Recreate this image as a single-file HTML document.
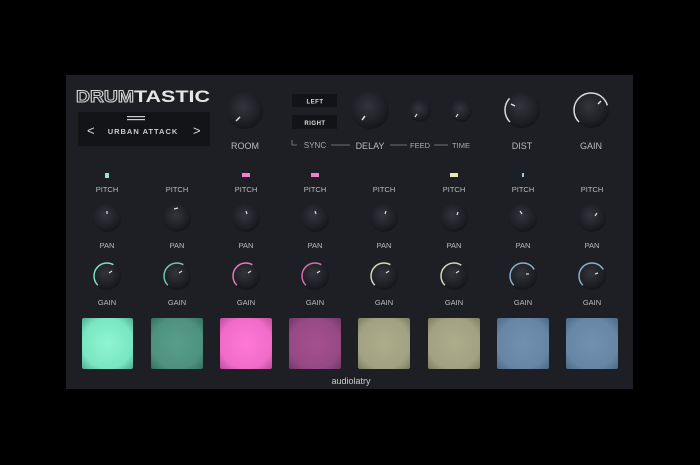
<!DOCTYPE html>
<html><head><style>
html,body{margin:0;padding:0;background:#000;width:700px;height:465px;overflow:hidden}
svg{display:block}
text{font-family:"Liberation Sans",sans-serif}
</style></head><body>
<svg width="700" height="465" viewBox="0 0 700 465" xmlns="http://www.w3.org/2000/svg">
<defs>
<radialGradient id="k" cx="45%" cy="40%" r="60%"><stop offset="0" stop-color="#33353c"/><stop offset="0.8" stop-color="#1c1d22"/><stop offset="1" stop-color="#141519"/></radialGradient>
<radialGradient id="p1" cx="50%" cy="50%" r="70%"><stop offset="0" stop-color="#8ff5d2"/><stop offset="0.7" stop-color="#7ae6c2"/><stop offset="1" stop-color="#4fae90"/></radialGradient>
<radialGradient id="p2" cx="50%" cy="50%" r="70%"><stop offset="0" stop-color="#579f8b"/><stop offset="0.7" stop-color="#4e917e"/><stop offset="1" stop-color="#36705f"/></radialGradient>
<radialGradient id="p3" cx="50%" cy="50%" r="70%"><stop offset="0" stop-color="#ff78d6"/><stop offset="0.7" stop-color="#f06cc8"/><stop offset="1" stop-color="#c04d9c"/></radialGradient>
<radialGradient id="p4" cx="50%" cy="50%" r="70%"><stop offset="0" stop-color="#a5508f"/><stop offset="0.7" stop-color="#964985"/><stop offset="1" stop-color="#723866"/></radialGradient>
<radialGradient id="p5" cx="50%" cy="50%" r="70%"><stop offset="0" stop-color="#adad8c"/><stop offset="0.7" stop-color="#a2a283"/><stop offset="1" stop-color="#7d7d63"/></radialGradient>
<radialGradient id="p7" cx="50%" cy="50%" r="70%"><stop offset="0" stop-color="#7190b0"/><stop offset="0.7" stop-color="#6786a6"/><stop offset="1" stop-color="#4e6982"/></radialGradient>
</defs>
<rect x="66" y="75" width="567" height="314" fill="#1d1f25"/>
<!-- logo -->
<text x="76" y="102" font-size="17" font-weight="bold" fill="none" stroke="#d8d8d8" stroke-width="1" textLength="58" lengthAdjust="spacingAndGlyphs">DRUM</text>
<text x="134" y="102" font-size="17" font-weight="bold" fill="#e6e6e6" textLength="76" lengthAdjust="spacingAndGlyphs">TASTIC</text>
<!-- preset -->
<rect x="78" y="112" width="132" height="34" fill="#131418"/>
<rect x="127" y="116" width="18" height="1.2" fill="#ccc"/><rect x="127" y="119" width="18" height="1.2" fill="#ccc"/>
<text x="87" y="135" font-size="13" fill="#ddd">&lt;</text>
<text x="193" y="135" font-size="13" fill="#ddd">&gt;</text>
<text x="143" y="134" font-size="7.5" font-weight="bold" fill="#ccc" text-anchor="middle" letter-spacing="1">URBAN ATTACK</text>
<!-- room -->
<circle cx="245" cy="111" r="18" fill="url(#k)"/><line x1="236" y1="121" x2="240" y2="117" stroke="#ddd" stroke-width="1.5"/>
<text x="245" y="149" font-size="9" fill="#bbb" text-anchor="middle">ROOM</text>
<!-- left/right -->
<rect x="292" y="94" width="45" height="13" fill="#121317"/><text x="315" y="103.5" font-size="6" font-weight="bold" fill="#ddd" text-anchor="middle" letter-spacing="0.5">LEFT</text>
<rect x="292" y="115" width="45" height="14" fill="#121317"/><text x="315" y="125" font-size="6" font-weight="bold" fill="#ddd" text-anchor="middle" letter-spacing="0.5">RIGHT</text>
<path d="M292 140v5h5" stroke="#888" fill="none" stroke-width="0.8"/>
<text x="315" y="148" font-size="8" fill="#aaa" text-anchor="middle">SYNC</text>
<line x1="331" y1="145" x2="350" y2="145" stroke="#888" stroke-width="0.8"/>
<circle cx="370" cy="110" r="19" fill="url(#k)"/><line x1="362" y1="120" x2="365" y2="116" stroke="#ddd" stroke-width="1.5"/>
<text x="370" y="149" font-size="9" fill="#bbb" text-anchor="middle">DELAY</text>
<line x1="390" y1="145" x2="407" y2="145" stroke="#888" stroke-width="0.8"/>
<circle cx="420" cy="111" r="11" fill="url(#k)"/><line x1="415" y1="117" x2="417" y2="114" stroke="#ddd" stroke-width="1.2"/>
<text x="420" y="148" font-size="7.5" fill="#aaa" text-anchor="middle">FEED</text>
<line x1="434" y1="145" x2="448" y2="145" stroke="#888" stroke-width="0.8"/>
<circle cx="461" cy="111" r="11" fill="url(#k)"/><line x1="456" y1="117" x2="458" y2="114" stroke="#ddd" stroke-width="1.2"/>
<text x="461" y="148" font-size="7.5" fill="#aaa" text-anchor="middle">TIME</text>
<circle cx="522" cy="110" r="18" fill="url(#k)"/>
<circle cx="522" cy="110" r="17" fill="none" stroke="#ddd" stroke-width="1.5" stroke-dasharray="26 200" transform="rotate(135 522 110)"/>
<line x1="511" y1="104" x2="515" y2="106" stroke="#ddd" stroke-width="1.5"/>
<text x="522" y="149" font-size="9" fill="#bbb" text-anchor="middle">DIST</text>
<circle cx="591" cy="110" r="18" fill="url(#k)"/>
<circle cx="591" cy="110" r="17" fill="none" stroke="#ddd" stroke-width="1.5" stroke-dasharray="62 200" transform="rotate(135 591 110)"/>
<line x1="601" y1="101" x2="598" y2="104" stroke="#ddd" stroke-width="1.5"/>
<text x="591" y="149" font-size="9" fill="#bbb" text-anchor="middle">GAIN</text>
<!-- channels -->
<g font-size="7.5" fill="#bbb" text-anchor="middle">
<text x="107" y="192">PITCH</text><text x="177" y="192">PITCH</text><text x="246" y="192">PITCH</text><text x="315" y="192">PITCH</text><text x="384" y="192">PITCH</text><text x="454" y="192">PITCH</text><text x="523" y="192">PITCH</text><text x="592" y="192">PITCH</text>
<text x="107" y="248">PAN</text><text x="177" y="248">PAN</text><text x="246" y="248">PAN</text><text x="315" y="248">PAN</text><text x="384" y="248">PAN</text><text x="454" y="248">PAN</text><text x="523" y="248">PAN</text><text x="592" y="248">PAN</text>
<text x="107" y="305">GAIN</text><text x="177" y="305">GAIN</text><text x="246" y="305">GAIN</text><text x="315" y="305">GAIN</text><text x="384" y="305">GAIN</text><text x="454" y="305">GAIN</text><text x="523" y="305">GAIN</text><text x="592" y="305">GAIN</text>
</g>
<rect x="105" y="173" width="4" height="5" fill="#8fe8c8"/>
<rect x="242" y="173" width="8" height="4" fill="#f080c8"/>
<rect x="311" y="173" width="8" height="4" fill="#f080c8"/>
<rect x="450" y="173" width="8" height="4" fill="#e8e8b0"/>
<rect x="522" y="173" width="2" height="4" fill="#9ac8e0"/>
<g>
<circle cx="107" cy="218" r="14" fill="url(#k)"/><line x1="107" y1="211" x2="107" y2="214" stroke="#ddd" stroke-width="1.2"/>
<circle cx="177" cy="218" r="14" fill="url(#k)"/><line x1="174" y1="209" x2="178" y2="208" stroke="#ddd" stroke-width="1.2"/>
<circle cx="246" cy="218" r="14" fill="url(#k)"/><line x1="246" y1="211" x2="247" y2="214" stroke="#ddd" stroke-width="1.2"/>
<circle cx="315" cy="218" r="14" fill="url(#k)"/><line x1="315" y1="211" x2="316" y2="214" stroke="#ddd" stroke-width="1.2"/>
<circle cx="384" cy="218" r="14" fill="url(#k)"/><line x1="386" y1="211" x2="385" y2="214" stroke="#ddd" stroke-width="1.2"/>
<circle cx="454" cy="218" r="14" fill="url(#k)"/><line x1="458" y1="212" x2="457" y2="215" stroke="#ddd" stroke-width="1.2"/>
<circle cx="523" cy="218" r="14" fill="url(#k)"/><line x1="520" y1="211" x2="522" y2="214" stroke="#ddd" stroke-width="1.2"/>
<circle cx="592" cy="218" r="14" fill="url(#k)"/><line x1="597" y1="213" x2="595" y2="216" stroke="#ddd" stroke-width="1.2"/>
</g>
<g stroke-width="1.5" fill="none">
<circle cx="107" cy="276" r="14" fill="url(#k)"/><circle cx="107" cy="276" r="13" stroke="#7fe0c0" stroke-dasharray="37 200" transform="rotate(135 107 276)"/>
<circle cx="177" cy="276" r="14" fill="url(#k)"/><circle cx="177" cy="276" r="13" stroke="#6cc8a8" stroke-dasharray="37 200" transform="rotate(135 177 276)"/>
<circle cx="246" cy="276" r="14" fill="url(#k)"/><circle cx="246" cy="276" r="13" stroke="#e878b8" stroke-dasharray="37 200" transform="rotate(135 246 276)"/>
<circle cx="315" cy="276" r="14" fill="url(#k)"/><circle cx="315" cy="276" r="13" stroke="#d070a8" stroke-dasharray="37 200" transform="rotate(135 315 276)"/>
<circle cx="384" cy="276" r="14" fill="url(#k)"/><circle cx="384" cy="276" r="13" stroke="#d8d8b8" stroke-dasharray="37 200" transform="rotate(135 384 276)"/>
<circle cx="454" cy="276" r="14" fill="url(#k)"/><circle cx="454" cy="276" r="13" stroke="#d8d8b8" stroke-dasharray="38 200" transform="rotate(135 454 276)"/>
<circle cx="523" cy="276" r="14" fill="url(#k)"/><circle cx="523" cy="276" r="13" stroke="#8ab0c8" stroke-dasharray="44 200" transform="rotate(135 523 276)"/>
<circle cx="592" cy="276" r="14" fill="url(#k)"/><circle cx="592" cy="276" r="13" stroke="#8ab0c8" stroke-dasharray="44 200" transform="rotate(135 592 276)"/>
</g>
<g stroke="#ddd" stroke-width="1.2">
<line x1="112" y1="271" x2="109" y2="273"/><line x1="182" y1="271" x2="179" y2="273"/><line x1="251" y1="271" x2="248" y2="273"/><line x1="320" y1="271" x2="317" y2="273"/>
<line x1="389" y1="271" x2="386" y2="273"/><line x1="459" y1="271" x2="456" y2="273"/><line x1="529" y1="274" x2="526" y2="274"/><line x1="598" y1="273" x2="595" y2="274"/>
</g>
<rect x="82" y="318" width="51" height="51" rx="2" fill="url(#p1)"/>
<rect x="151" y="318" width="52" height="51" rx="2" fill="url(#p2)"/>
<rect x="220" y="318" width="52" height="51" rx="2" fill="url(#p3)"/>
<rect x="289" y="318" width="52" height="51" rx="2" fill="url(#p4)"/>
<rect x="358" y="318" width="52" height="51" rx="2" fill="url(#p5)"/>
<rect x="428" y="318" width="52" height="51" rx="2" fill="url(#p5)"/>
<rect x="497" y="318" width="52" height="51" rx="2" fill="url(#p7)"/>
<rect x="566" y="318" width="52" height="51" rx="2" fill="url(#p7)"/>
<text x="351" y="384" font-size="9" fill="#ccc" text-anchor="middle">audiolatry</text>
</svg>
</body></html>
